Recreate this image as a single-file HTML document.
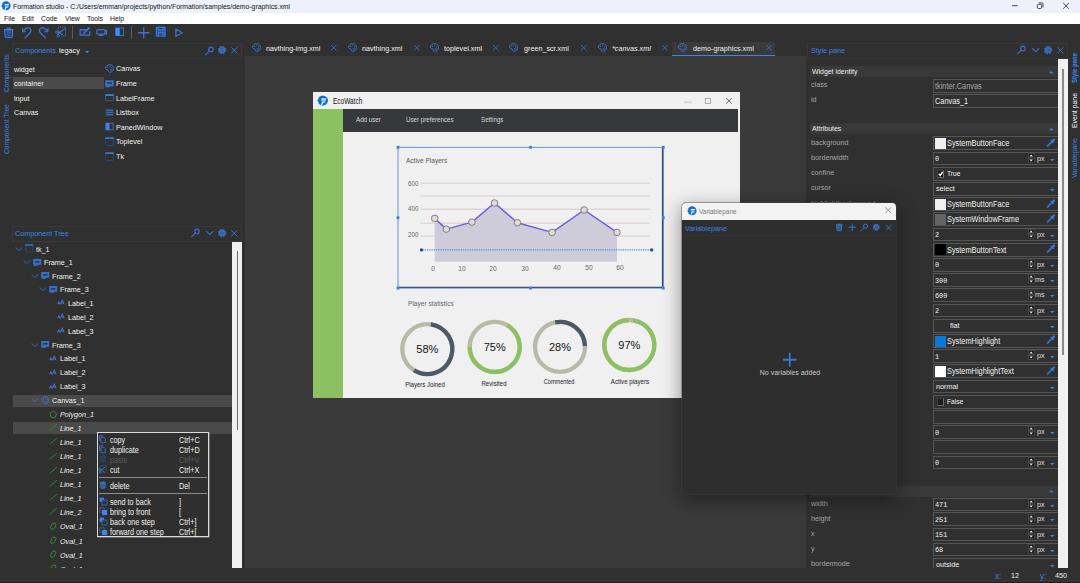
<!DOCTYPE html>
<html><head><meta charset="utf-8"><title>Formation studio</title>
<style>
*{margin:0;padding:0;box-sizing:border-box}
html,body{width:1080px;height:583px;overflow:hidden;background:#303030}
body{font-family:"Liberation Sans",sans-serif;font-size:8px;color:#f0f0f0;position:relative;line-height:1}
.a{position:absolute}
.t{position:absolute;white-space:nowrap;line-height:10px;height:10px;transform:scaleX(.9);transform-origin:0 50%}
.c{transform-origin:50% 50%}
.b{color:#3d84e8}
.g{color:#a6a6a6}
.i{font-style:italic}
svg{position:absolute;overflow:visible}
.hdr{position:absolute;border:1px solid #393939;background:#303030}
.band{position:absolute;background:#393939}
.ent{position:absolute;border:1px solid #555;background:#303030}
.mono{font-family:"Liberation Mono",monospace;font-size:7.6px}
.vt{position:absolute;white-space:nowrap;transform-origin:0 0;transform:rotate(-90deg) scaleX(.87);line-height:10px;height:10px}
</style></head><body>

<div class="a" style="left:0;top:0;width:1080px;height:13px;background:#eef1f9"></div>
<div class="a" style="left:0;top:12.5px;width:1080px;height:11.5px;background:#fff"></div>
<svg style="left:0.75px;top:1.30px" width="9.6" height="9.6" viewBox="0 0 20 20" ><ellipse cx="10.500" cy="10" rx="9.500" ry="9.300" fill="#0b6fd0"/><path d="M0 5.500l4.500 1.500-4.500 1.500zM0 11.500l4 1.500-4 2z" fill="#f0f0f0" opacity="0.9"/><path d="M8 6.200h8.500v2.400h-8.500z" fill="#fff"/><path d="M7.500 9.300h8.500v1.800h-8.500z" fill="#9cc6ef"/><path d="M9.500 11.600h6l-0.500 2h-3.500l-2 4.500h-2.300z" fill="#fff"/></svg>
<div class="t " style="left:12.8px;top:1.90px;color:#111;font-size:7.4px;transform:scaleX(.928)">Formation studio - C:/Users/emman/projects/python/Formation/samples/demo-graphics.xml</div>
<div class="t " style="left:4px;top:13.50px;color:#111;font-size:7.6px">File</div>
<div class="t " style="left:21.5px;top:13.50px;color:#111;font-size:7.6px">Edit</div>
<div class="t " style="left:41px;top:13.50px;color:#111;font-size:7.6px">Code</div>
<div class="t " style="left:64.5px;top:13.50px;color:#111;font-size:7.6px">View</div>
<div class="t " style="left:87px;top:13.50px;color:#111;font-size:7.6px">Tools</div>
<div class="t " style="left:109.5px;top:13.50px;color:#111;font-size:7.6px">Help</div>
<svg style="left:0;top:0" width="1080" height="13"><g stroke="#333" stroke-width="0.900" fill="none"><path d="M1012 5.700h5.700"/><rect x="1037.400" y="4.200" width="4.200" height="4.300" rx="1.100"/><path d="M1038.800 2.900h3a1.200 1.200 0 0 1 1.200 1.200v3.300"/><path d="M1063.200 3l5.700 5.700m0-5.700l-5.700 5.700"/></g></svg>
<div class="a" style="left:0;top:24px;width:1080px;height:18.5px;background:#303030"></div>
<svg style="left:3.15px;top:26.85px" width="11.5" height="11.5" viewBox="0 0 20 20" ><g stroke="#3d84e8" stroke-width="1.700" stroke-linejoin="round" stroke-linecap="round"><path d="M3.500 5h13v11.500a2 2 0 0 1-2 2h-9a2 2 0 0 1-2-2z" fill="#2a5396" fill-opacity="0.600"/><path d="M2.500 4.500h15M7 2h6" fill="none"/><path d="M7.500 8v7.500M10 8v7.500M12.500 8v7.500" stroke-width="1" opacity="0.7"/></g></svg>
<svg style="left:20.85px;top:26.55px" width="11.5" height="11.5" viewBox="0 0 20 20" ><g stroke="#3874d2" fill="none" stroke-width="2.300" stroke-linecap="round" stroke-linejoin="round" stroke-width="1.500"><path d="M3.700 7.700C6 3.500 10 1 13.500 1.500 17 2 18.500 6 16.500 9 14.500 12 10 15.500 7.200 18.700"/><path d="M2.800 2.800V8.200H8.200" stroke-width="1.900"/></g></svg>
<svg style="left:38.45px;top:26.55px" width="11.5" height="11.5" viewBox="0 0 20 20" ><g stroke="#3874d2" fill="none" stroke-width="2.300" stroke-linecap="round" stroke-linejoin="round" stroke-width="1.500" transform="translate(20,0) scale(-1,1)"><path d="M3.700 7.700C6 3.500 10 1 13.500 1.500 17 2 18.500 6 16.500 9 14.500 12 10 15.500 7.200 18.700"/><path d="M2.800 2.800V8.200H8.200" stroke-width="1.900"/></g></svg>
<svg style="left:55.35px;top:26.45px" width="11.5" height="11.5" viewBox="0 0 20 20" ><g stroke="#3d84e8" fill="none" stroke-width="1.500"><path d="M5.500 9V2h13v15.500h-8" stroke-dasharray="2.200 1.200" stroke-width="1.300"/><path d="M17 5L4.500 13M5 10l9 5.500" stroke-width="1.800"/><circle cx="3" cy="10.500" r="2.100"/><circle cx="5.500" cy="16.800" r="2.100"/></g></svg>
<div class="a" style="left:72px;top:26.2px;width:1px;height:13px;background:#5a5a5a"></div>
<svg style="left:79.25px;top:26.45px" width="11.5" height="11.5" viewBox="0 0 20 20" ><g stroke="#3874d2" fill="none" stroke-width="2.300" stroke-linecap="round" stroke-linejoin="round" stroke-width="1.500"><path d="M11 6.500H2v9.300h16.500V10"/><path d="M8.500 12.500L17.500 3.500" stroke-width="3.200"/></g></svg>
<svg style="left:96.45px;top:26.65px" width="11.5" height="11.5" viewBox="0 0 20 20" ><g stroke="#3874d2" fill="none" stroke-width="2.300" stroke-linecap="round" stroke-linejoin="round" stroke-width="1.200"><rect x="1.500" y="4.500" width="14" height="8" rx="2"/><path d="M15.500 6h2.800v6.500h-2.800M5.500 14.500h6" /></g></svg>
<svg style="left:114.10px;top:26.40px" width="11.5" height="11.5" viewBox="0 0 20 20" ><rect x="3" y="3.500" width="14" height="13" fill="none" stroke="#3d84e8" stroke-width="1.400"/><rect x="3" y="3.500" width="7" height="13" fill="#3d8aff"/></svg>
<div class="a" style="left:131px;top:26.2px;width:1px;height:13px;background:#5a5a5a"></div>
<svg style="left:137.55px;top:26.65px" width="11.5" height="11.5" viewBox="0 0 20 20" ><g stroke="#3874d2" fill="none" stroke-width="2.300" stroke-linecap="round" stroke-linejoin="round" stroke-width="1.400"><path d="M10 1v18M1 10h18"/></g></svg>
<svg style="left:155.25px;top:26.45px" width="11.5" height="11.5" viewBox="0 0 20 20" ><g stroke="#3874d2" fill="none" stroke-width="2.300" stroke-linecap="round" stroke-linejoin="round" stroke-width="1.500"><path d="M2.500 2.500h15v15h-15z" fill="#2458a8"/><path d="M6 2.500v4.500h8v-4.500z" fill="#303030"/><path d="M6 17.500v-6h8v6" fill="#303030" fill-opacity="0.5"/></g></svg>
<svg style="left:173.25px;top:26.55px" width="11.5" height="11.5" viewBox="0 0 20 20" ><g stroke="#3874d2" fill="none" stroke-width="2.300" stroke-linecap="round" stroke-linejoin="round" stroke-width="1.5"><path d="M5 3.500L16 10 5 16.500z"/></g></svg>
<div class="vt b" style="left:1.6px;top:91.5px;font-size:7.7px">Components</div>
<div class="vt b" style="left:1.6px;top:153.5px;font-size:7.7px">Component Tree</div>
<div class="hdr" style="left:11.5px;top:42.5px;width:230px;height:16px"></div>
<div class="t b" style="left:14.5px;top:46.10px;">Components</div>
<div class="t " style="left:59px;top:46.10px;">legacy</div>
<svg style="left:85.00px;top:51.10px" width="4.4" height="2.2" viewBox="0 0 10 5"><path d="M0 0h10L5 5z" fill="#3d84e8"/></svg>
<svg style="left:204.90px;top:45.60px" width="9.2" height="9.2" viewBox="0 0 20 20" ><g stroke="#3874d2" fill="none" stroke-width="2.300" stroke-linecap="round" stroke-linejoin="round"><circle cx="13" cy="7.500" r="5"/><path d="M9.300 11.200L1.500 19"/></g></svg>
<svg style="left:216.70px;top:45.20px" width="10.2" height="10.2" viewBox="0 0 20 20" ><g stroke="#3874d2" fill="none"><circle cx="10" cy="10" r="6.800" stroke-width="2.800" stroke-dasharray="3.300 2.040" opacity="0.9"/><circle cx="10" cy="10" r="4.600" stroke-width="3.600" opacity="0.85"/><circle cx="10" cy="10" r="1.600" stroke-width="1.200" stroke="#5590e8"/></g></svg>
<svg style="left:230.10px;top:46.00px" width="8.6" height="8.6" viewBox="0 0 20 20" ><g stroke="#3874d2" fill="none" stroke-width="2.300" stroke-linecap="round" stroke-linejoin="round" stroke-width="2.900"><path d="M3.500 3.500l13 13M16.500 3.500l-13 13"/></g></svg>
<div class="a" style="left:12.5px;top:77px;width:91.5px;height:12.3px;background:#4a4a4a"></div>
<div class="t " style="left:14.2px;top:64.60px;">widget</div>
<div class="t " style="left:14.2px;top:79.22px;">container</div>
<div class="t " style="left:14.2px;top:93.84px;">input</div>
<div class="t " style="left:14.2px;top:108.46px;">Canvas</div>
<svg style="left:105.10px;top:64.00px" width="9" height="9" viewBox="0 0 20 20" ><g stroke="#3a78d6" fill="none" stroke-width="2" stroke-linejoin="round"><path d="M10.500 1.500C5 1.500 1.200 5 1.200 9c0 2.300 1.600 3.600 3.400 3.600 1.700 0 2.900 0.700 3.100 2.400 0.300 2.300 1.400 3.500 3.600 3.500 4.400 0 7.500-3.800 7.500-8.500 0-5-3.500-8.500-8.300-8.500z"/><circle cx="6" cy="7.500" r="1.300" fill="#3a78d6" stroke="none"/><circle cx="10.500" cy="5.500" r="1.300" fill="#3a78d6" stroke="none"/><circle cx="14.500" cy="8.500" r="1.300" fill="#3a78d6" stroke="none"/><circle cx="13" cy="13.500" r="1.500" stroke-width="1.300"/></g></svg>
<div class="t " style="left:116.3px;top:64.30px;">Canvas</div>
<svg style="left:105.10px;top:78.60px" width="9" height="9" viewBox="0 0 20 20" ><path d="M0.500 2.500h19v13.500h-7.500v2.300h-10.500v-2.300h-1z" fill="#356fc9"/><path d="M5 7.200h10.500v3.800h-10.500z" fill="#303030" opacity="0.85"/></svg>
<div class="t " style="left:116.3px;top:78.90px;">Frame</div>
<svg style="left:105.10px;top:93.20px" width="9" height="9" viewBox="0 0 20 20" ><rect x="1.200" y="3.500" width="17.600" height="13.500" rx="1" fill="none" stroke="#2f62b3" stroke-width="1.800"/><rect x="0.500" y="2.500" width="19" height="4" rx="1" fill="#3d7de0"/></svg>
<div class="t " style="left:116.3px;top:93.50px;">LabelFrame</div>
<svg style="left:105.10px;top:107.80px" width="9" height="9" viewBox="0 0 20 20" ><path d="M1.500 5h17M1.500 10h17M1.500 15h17" stroke="#3468bd" stroke-width="2.800"/></svg>
<div class="t " style="left:116.3px;top:108.10px;">Listbox</div>
<svg style="left:105.10px;top:122.40px" width="9" height="9" viewBox="0 0 20 20" ><rect x="2" y="2.500" width="16" height="15" fill="none" stroke="#3d84e8" stroke-width="1.6"/><rect x="2" y="2.500" width="8" height="15" fill="#3d84e8"/></svg>
<div class="t " style="left:116.3px;top:122.70px;">PanedWindow</div>
<svg style="left:105.10px;top:137.00px" width="9" height="9" viewBox="0 0 20 20" ><rect x="1.500" y="2" width="17" height="17" rx="2.500" fill="none" stroke="#2756a3" stroke-width="1.500"/><path d="M1.200 2.300h17.600" stroke="#3d8aff" stroke-width="2.800" stroke-linecap="round"/></svg>
<div class="t " style="left:116.3px;top:137.30px;">Toplevel</div>
<svg style="left:105.10px;top:151.60px" width="9" height="9" viewBox="0 0 20 20" ><rect x="1.500" y="2" width="17" height="17" rx="2.500" fill="none" stroke="#2756a3" stroke-width="1.500"/><path d="M1.200 2.300h17.600" stroke="#3d8aff" stroke-width="2.800" stroke-linecap="round"/></svg>
<div class="t " style="left:116.3px;top:151.90px;">Tk</div>
<div class="hdr" style="left:11.5px;top:225.5px;width:230px;height:16px"></div>
<div class="t b" style="left:14.5px;top:228.90px;">Component Tree</div>
<svg style="left:191.10px;top:228.30px" width="9.2" height="9.2" viewBox="0 0 20 20" ><g stroke="#3874d2" fill="none" stroke-width="2.300" stroke-linecap="round" stroke-linejoin="round"><circle cx="13" cy="7.500" r="5"/><path d="M9.300 11.200L1.500 19"/></g></svg>
<svg style="left:205.25px;top:227.85px" width="9.3" height="9.3" viewBox="0 0 20 20" ><g stroke="#3874d2" fill="none" stroke-width="2.300" stroke-linecap="round" stroke-linejoin="round"><path d="M3 7l7 7 7-7"/></g></svg>
<svg style="left:217.00px;top:227.90px" width="10.2" height="10.2" viewBox="0 0 20 20" ><g stroke="#3874d2" fill="none"><circle cx="10" cy="10" r="6.800" stroke-width="2.800" stroke-dasharray="3.300 2.040" opacity="0.9"/><circle cx="10" cy="10" r="4.600" stroke-width="3.600" opacity="0.85"/><circle cx="10" cy="10" r="1.600" stroke-width="1.200" stroke="#5590e8"/></g></svg>
<svg style="left:230.20px;top:228.70px" width="8.6" height="8.6" viewBox="0 0 20 20" ><g stroke="#3874d2" fill="none" stroke-width="2.300" stroke-linecap="round" stroke-linejoin="round" stroke-width="2.900"><path d="M3.500 3.500l13 13M16.500 3.500l-13 13"/></g></svg>
<div class="a" style="left:231.900px;top:242px;width:10.500px;height:326.200px;background:#f0f0f0"></div>
<div class="a" style="left:236.700px;top:251.300px;width:1.400px;height:178.700px;background:#6a6a6a"></div>
<div class="a" style="left:12.500px;top:394.600px;width:219.400px;height:12.300px;background:#4a4a4a"></div>
<div class="a" style="left:12.500px;top:422px;width:219.400px;height:12.300px;background:#4a4a4a"></div>
<div class="a" style="left:12px;top:242px;width:220px;height:326px;overflow:hidden"><div class="a" style="left:-12px;top:-242px">
<svg style="left:14.70px;top:244.60px" width="8" height="8" viewBox="0 0 20 20" ><g stroke="#3874d2" fill="none" stroke-width="2.300" stroke-linecap="round" stroke-linejoin="round"><path d="M3 7l7 7 7-7"/></g></svg>
<svg style="left:24.80px;top:244.20px" width="8.4" height="8.4" viewBox="0 0 20 20" ><rect x="1.500" y="2" width="17" height="17" rx="2.500" fill="none" stroke="#2756a3" stroke-width="1.500"/><path d="M1.200 2.300h17.600" stroke="#3d8aff" stroke-width="2.800" stroke-linecap="round"/></svg>
<div class="t " style="left:35.9px;top:244.60px;">tk_1</div>
<svg style="left:22.70px;top:258.00px" width="8" height="8" viewBox="0 0 20 20" ><g stroke="#3874d2" fill="none" stroke-width="2.300" stroke-linecap="round" stroke-linejoin="round"><path d="M3 7l7 7 7-7"/></g></svg>
<svg style="left:32.80px;top:257.60px" width="8.4" height="8.4" viewBox="0 0 20 20" ><path d="M0.500 2.500h19v13.500h-7.500v2.300h-10.500v-2.300h-1z" fill="#356fc9"/><path d="M5 7.200h10.500v3.800h-10.500z" fill="#303030" opacity="0.85"/></svg>
<div class="t " style="left:43.9px;top:258.00px;">Frame_1</div>
<svg style="left:30.70px;top:271.60px" width="8" height="8" viewBox="0 0 20 20" ><g stroke="#3874d2" fill="none" stroke-width="2.300" stroke-linecap="round" stroke-linejoin="round"><path d="M3 7l7 7 7-7"/></g></svg>
<svg style="left:40.80px;top:271.20px" width="8.4" height="8.4" viewBox="0 0 20 20" ><path d="M0.500 2.500h19v13.500h-7.500v2.300h-10.500v-2.300h-1z" fill="#356fc9"/><path d="M5 7.200h10.500v3.800h-10.500z" fill="#303030" opacity="0.85"/></svg>
<div class="t " style="left:51.900000000000006px;top:271.60px;">Frame_2</div>
<svg style="left:38.70px;top:285.10px" width="8" height="8" viewBox="0 0 20 20" ><g stroke="#3874d2" fill="none" stroke-width="2.300" stroke-linecap="round" stroke-linejoin="round"><path d="M3 7l7 7 7-7"/></g></svg>
<svg style="left:48.80px;top:284.70px" width="8.4" height="8.4" viewBox="0 0 20 20" ><path d="M0.500 2.500h19v13.500h-7.500v2.300h-10.500v-2.300h-1z" fill="#356fc9"/><path d="M5 7.200h10.500v3.800h-10.500z" fill="#303030" opacity="0.85"/></svg>
<div class="t " style="left:59.900000000000006px;top:285.10px;">Frame_3</div>
<svg style="left:56.80px;top:298.20px" width="8.4" height="8.4" viewBox="0 0 20 20" ><g stroke="#3d84e8" fill="none" stroke-width="2" stroke-linejoin="miter"><path d="M1.500 15.500l3-7 3 7M3 13h3.500"/><path d="M8.500 15.500l4-11.500 4.500 11.500M10.500 11.500h5"/></g></svg>
<div class="t " style="left:67.9px;top:298.60px;">Label_1</div>
<svg style="left:56.80px;top:312.20px" width="8.4" height="8.4" viewBox="0 0 20 20" ><g stroke="#3d84e8" fill="none" stroke-width="2" stroke-linejoin="miter"><path d="M1.500 15.500l3-7 3 7M3 13h3.500"/><path d="M8.500 15.500l4-11.500 4.500 11.500M10.500 11.500h5"/></g></svg>
<div class="t " style="left:67.9px;top:312.60px;">Label_2</div>
<svg style="left:56.80px;top:326.20px" width="8.4" height="8.4" viewBox="0 0 20 20" ><g stroke="#3d84e8" fill="none" stroke-width="2" stroke-linejoin="miter"><path d="M1.500 15.500l3-7 3 7M3 13h3.500"/><path d="M8.500 15.500l4-11.500 4.500 11.500M10.500 11.500h5"/></g></svg>
<div class="t " style="left:67.9px;top:326.60px;">Label_3</div>
<svg style="left:30.70px;top:340.80px" width="8" height="8" viewBox="0 0 20 20" ><g stroke="#3874d2" fill="none" stroke-width="2.300" stroke-linecap="round" stroke-linejoin="round"><path d="M3 7l7 7 7-7"/></g></svg>
<svg style="left:40.80px;top:340.40px" width="8.4" height="8.4" viewBox="0 0 20 20" ><path d="M0.500 2.500h19v13.500h-7.500v2.300h-10.500v-2.300h-1z" fill="#356fc9"/><path d="M5 7.200h10.500v3.800h-10.500z" fill="#303030" opacity="0.85"/></svg>
<div class="t " style="left:51.900000000000006px;top:340.80px;">Frame_3</div>
<svg style="left:48.80px;top:353.90px" width="8.4" height="8.4" viewBox="0 0 20 20" ><g stroke="#3d84e8" fill="none" stroke-width="2" stroke-linejoin="miter"><path d="M1.500 15.500l3-7 3 7M3 13h3.500"/><path d="M8.500 15.500l4-11.500 4.500 11.500M10.500 11.500h5"/></g></svg>
<div class="t " style="left:59.900000000000006px;top:354.30px;">Label_1</div>
<svg style="left:48.80px;top:367.90px" width="8.4" height="8.4" viewBox="0 0 20 20" ><g stroke="#3d84e8" fill="none" stroke-width="2" stroke-linejoin="miter"><path d="M1.500 15.500l3-7 3 7M3 13h3.500"/><path d="M8.500 15.500l4-11.500 4.500 11.500M10.500 11.500h5"/></g></svg>
<div class="t " style="left:59.900000000000006px;top:368.30px;">Label_2</div>
<svg style="left:48.80px;top:381.90px" width="8.4" height="8.4" viewBox="0 0 20 20" ><g stroke="#3d84e8" fill="none" stroke-width="2" stroke-linejoin="miter"><path d="M1.500 15.500l3-7 3 7M3 13h3.500"/><path d="M8.500 15.500l4-11.500 4.500 11.500M10.500 11.500h5"/></g></svg>
<div class="t " style="left:59.900000000000006px;top:382.30px;">Label_3</div>
<svg style="left:30.70px;top:396.30px" width="8" height="8" viewBox="0 0 20 20" ><g stroke="#3874d2" fill="none" stroke-width="2.300" stroke-linecap="round" stroke-linejoin="round"><path d="M3 7l7 7 7-7"/></g></svg>
<svg style="left:40.80px;top:395.90px" width="8.4" height="8.4" viewBox="0 0 20 20" ><g stroke="#3a78d6" fill="none" stroke-width="2" stroke-linejoin="round"><path d="M10.500 1.500C5 1.500 1.200 5 1.200 9c0 2.300 1.600 3.600 3.400 3.600 1.700 0 2.900 0.700 3.100 2.400 0.300 2.300 1.400 3.500 3.600 3.500 4.400 0 7.500-3.800 7.500-8.500 0-5-3.500-8.500-8.300-8.500z"/><circle cx="6" cy="7.500" r="1.300" fill="#3a78d6" stroke="none"/><circle cx="10.500" cy="5.500" r="1.300" fill="#3a78d6" stroke="none"/><circle cx="14.500" cy="8.500" r="1.300" fill="#3a78d6" stroke="none"/><circle cx="13" cy="13.500" r="1.500" stroke-width="1.300"/></g></svg>
<div class="t " style="left:51.900000000000006px;top:396.30px;">Canvas_1</div>
<svg style="left:48.80px;top:409.70px" width="8.4" height="8.4" viewBox="0 0 20 20" ><path d="M10 2.500l8 6-3 9h-10l-3-9z" fill="none" stroke="#35a83a" stroke-width="1.8" stroke-linejoin="round"/></svg>
<div class="t i" style="left:59.900000000000006px;top:410.10px;">Polygon_1</div>
<svg style="left:48.80px;top:423.40px" width="8.4" height="8.4" viewBox="0 0 20 20" ><path d="M2.500 17L18 3.500" fill="none" stroke="#35a83a" stroke-width="1.7" stroke-linecap="round"/></svg>
<div class="t i" style="left:59.900000000000006px;top:423.80px;">Line_1</div>
<svg style="left:48.80px;top:437.40px" width="8.4" height="8.4" viewBox="0 0 20 20" ><path d="M2.500 17L18 3.500" fill="none" stroke="#35a83a" stroke-width="1.7" stroke-linecap="round"/></svg>
<div class="t i" style="left:59.900000000000006px;top:437.80px;">Line_1</div>
<svg style="left:48.80px;top:451.60px" width="8.4" height="8.4" viewBox="0 0 20 20" ><path d="M2.500 17L18 3.500" fill="none" stroke="#35a83a" stroke-width="1.7" stroke-linecap="round"/></svg>
<div class="t i" style="left:59.900000000000006px;top:452.00px;">Line_1</div>
<svg style="left:48.80px;top:465.60px" width="8.4" height="8.4" viewBox="0 0 20 20" ><path d="M2.500 17L18 3.500" fill="none" stroke="#35a83a" stroke-width="1.7" stroke-linecap="round"/></svg>
<div class="t i" style="left:59.900000000000006px;top:466.00px;">Line_1</div>
<svg style="left:48.80px;top:479.40px" width="8.4" height="8.4" viewBox="0 0 20 20" ><path d="M2.500 17L18 3.500" fill="none" stroke="#35a83a" stroke-width="1.7" stroke-linecap="round"/></svg>
<div class="t i" style="left:59.900000000000006px;top:479.80px;">Line_1</div>
<svg style="left:48.80px;top:493.40px" width="8.4" height="8.4" viewBox="0 0 20 20" ><path d="M2.500 17L18 3.500" fill="none" stroke="#35a83a" stroke-width="1.7" stroke-linecap="round"/></svg>
<div class="t i" style="left:59.900000000000006px;top:493.80px;">Line_1</div>
<svg style="left:48.80px;top:507.40px" width="8.4" height="8.4" viewBox="0 0 20 20" ><path d="M2.500 17L18 3.500" fill="none" stroke="#35a83a" stroke-width="1.7" stroke-linecap="round"/></svg>
<div class="t i" style="left:59.900000000000006px;top:507.80px;">Line_2</div>
<svg style="left:48.80px;top:521.90px" width="8.4" height="8.4" viewBox="0 0 20 20" ><ellipse cx="10" cy="10" rx="5" ry="8.500" transform="rotate(32 10 10)" fill="none" stroke="#35a83a" stroke-width="1.7"/></svg>
<div class="t i" style="left:59.900000000000006px;top:522.30px;">Oval_1</div>
<svg style="left:48.80px;top:536.10px" width="8.4" height="8.4" viewBox="0 0 20 20" ><ellipse cx="10" cy="10" rx="5" ry="8.500" transform="rotate(32 10 10)" fill="none" stroke="#35a83a" stroke-width="1.7"/></svg>
<div class="t i" style="left:59.900000000000006px;top:536.50px;">Oval_1</div>
<svg style="left:48.80px;top:550.20px" width="8.4" height="8.4" viewBox="0 0 20 20" ><ellipse cx="10" cy="10" rx="5" ry="8.500" transform="rotate(32 10 10)" fill="none" stroke="#35a83a" stroke-width="1.7"/></svg>
<div class="t i" style="left:59.900000000000006px;top:550.60px;">Oval_1</div>
<svg style="left:48.80px;top:564.20px" width="8.4" height="8.4" viewBox="0 0 20 20" ><ellipse cx="10" cy="10" rx="5" ry="8.500" transform="rotate(32 10 10)" fill="none" stroke="#35a83a" stroke-width="1.7"/></svg>
<div class="t i" style="left:59.900000000000006px;top:564.60px;">Oval_1</div>
</div></div>
<div class="a" style="left:244.8px;top:56px;width:561.2px;height:512.3px;background:#3a3a3a"></div>
<div class="a" style="left:671.5px;top:42.3px;width:103.5px;height:13.7px;background:#3a3a3a"></div>
<div class="a" style="left:671.5px;top:54.6px;width:103.5px;height:1.6px;background:#3d84e8"></div>
<svg style="left:251.50px;top:43.40px" width="9" height="9" viewBox="0 0 20 20" ><g stroke="#3a78d6" fill="none" stroke-width="2" stroke-linejoin="round"><path d="M10.500 1.500C5 1.500 1.200 5 1.200 9c0 2.300 1.600 3.600 3.400 3.600 1.700 0 2.900 0.700 3.100 2.400 0.300 2.300 1.400 3.500 3.600 3.500 4.400 0 7.500-3.800 7.500-8.500 0-5-3.500-8.500-8.300-8.500z"/><circle cx="6" cy="7.500" r="1.300" fill="#3a78d6" stroke="none"/><circle cx="10.500" cy="5.500" r="1.300" fill="#3a78d6" stroke="none"/><circle cx="14.500" cy="8.500" r="1.300" fill="#3a78d6" stroke="none"/><circle cx="13" cy="13.500" r="1.500" stroke-width="1.300"/></g></svg>
<div class="t " style="left:265.5px;top:44.20px;">navthing-img.xml</div>
<svg style="left:330.25px;top:44.25px" width="7.5" height="7.5" viewBox="0 0 20 20" ><g stroke="#3874d2" fill="none" stroke-width="2.300" stroke-linecap="round" stroke-linejoin="round" stroke-width="2.900"><path d="M3.500 3.500l13 13M16.500 3.500l-13 13"/></g></svg>
<svg style="left:347.50px;top:43.40px" width="9" height="9" viewBox="0 0 20 20" ><g stroke="#3a78d6" fill="none" stroke-width="2" stroke-linejoin="round"><path d="M10.500 1.500C5 1.500 1.200 5 1.200 9c0 2.300 1.600 3.600 3.400 3.600 1.700 0 2.900 0.700 3.100 2.400 0.300 2.300 1.400 3.500 3.600 3.500 4.400 0 7.500-3.800 7.500-8.500 0-5-3.500-8.500-8.300-8.500z"/><circle cx="6" cy="7.500" r="1.300" fill="#3a78d6" stroke="none"/><circle cx="10.500" cy="5.500" r="1.300" fill="#3a78d6" stroke="none"/><circle cx="14.500" cy="8.500" r="1.300" fill="#3a78d6" stroke="none"/><circle cx="13" cy="13.500" r="1.500" stroke-width="1.300"/></g></svg>
<div class="t " style="left:361.8px;top:44.20px;">navthing.xml</div>
<svg style="left:412.75px;top:44.25px" width="7.5" height="7.5" viewBox="0 0 20 20" ><g stroke="#3874d2" fill="none" stroke-width="2.300" stroke-linecap="round" stroke-linejoin="round" stroke-width="2.900"><path d="M3.500 3.500l13 13M16.500 3.500l-13 13"/></g></svg>
<svg style="left:429.50px;top:43.40px" width="9" height="9" viewBox="0 0 20 20" ><g stroke="#3a78d6" fill="none" stroke-width="2" stroke-linejoin="round"><path d="M10.500 1.500C5 1.500 1.200 5 1.200 9c0 2.300 1.600 3.600 3.400 3.600 1.700 0 2.900 0.700 3.100 2.400 0.300 2.300 1.400 3.500 3.600 3.500 4.400 0 7.500-3.800 7.500-8.500 0-5-3.500-8.500-8.300-8.500z"/><circle cx="6" cy="7.500" r="1.300" fill="#3a78d6" stroke="none"/><circle cx="10.500" cy="5.500" r="1.300" fill="#3a78d6" stroke="none"/><circle cx="14.500" cy="8.500" r="1.300" fill="#3a78d6" stroke="none"/><circle cx="13" cy="13.500" r="1.500" stroke-width="1.300"/></g></svg>
<div class="t " style="left:443.8px;top:44.20px;">toplevel.xml</div>
<svg style="left:492.25px;top:44.25px" width="7.5" height="7.5" viewBox="0 0 20 20" ><g stroke="#3874d2" fill="none" stroke-width="2.300" stroke-linecap="round" stroke-linejoin="round" stroke-width="2.900"><path d="M3.500 3.500l13 13M16.500 3.500l-13 13"/></g></svg>
<svg style="left:509.30px;top:43.40px" width="9" height="9" viewBox="0 0 20 20" ><g stroke="#3a78d6" fill="none" stroke-width="2" stroke-linejoin="round"><path d="M10.500 1.500C5 1.500 1.200 5 1.200 9c0 2.300 1.600 3.600 3.400 3.600 1.700 0 2.900 0.700 3.100 2.400 0.300 2.300 1.400 3.500 3.600 3.500 4.400 0 7.500-3.800 7.500-8.500 0-5-3.500-8.500-8.300-8.500z"/><circle cx="6" cy="7.500" r="1.300" fill="#3a78d6" stroke="none"/><circle cx="10.500" cy="5.500" r="1.300" fill="#3a78d6" stroke="none"/><circle cx="14.500" cy="8.500" r="1.300" fill="#3a78d6" stroke="none"/><circle cx="13" cy="13.500" r="1.500" stroke-width="1.300"/></g></svg>
<div class="t " style="left:523.5px;top:44.20px;">green_scr.xml</div>
<svg style="left:580.05px;top:44.25px" width="7.5" height="7.5" viewBox="0 0 20 20" ><g stroke="#3874d2" fill="none" stroke-width="2.300" stroke-linecap="round" stroke-linejoin="round" stroke-width="2.900"><path d="M3.500 3.500l13 13M16.500 3.500l-13 13"/></g></svg>
<svg style="left:597.50px;top:43.40px" width="9" height="9" viewBox="0 0 20 20" ><g stroke="#3a78d6" fill="none" stroke-width="2" stroke-linejoin="round"><path d="M10.500 1.500C5 1.500 1.200 5 1.200 9c0 2.300 1.600 3.600 3.400 3.600 1.700 0 2.900 0.700 3.100 2.400 0.300 2.300 1.400 3.500 3.600 3.500 4.400 0 7.500-3.800 7.500-8.500 0-5-3.500-8.500-8.300-8.500z"/><circle cx="6" cy="7.500" r="1.300" fill="#3a78d6" stroke="none"/><circle cx="10.500" cy="5.500" r="1.300" fill="#3a78d6" stroke="none"/><circle cx="14.500" cy="8.500" r="1.300" fill="#3a78d6" stroke="none"/><circle cx="13" cy="13.500" r="1.500" stroke-width="1.300"/></g></svg>
<div class="t i" style="left:612px;top:44.20px;">*canvas.xml</div>
<svg style="left:661.25px;top:44.25px" width="7.5" height="7.5" viewBox="0 0 20 20" ><g stroke="#3874d2" fill="none" stroke-width="2.300" stroke-linecap="round" stroke-linejoin="round" stroke-width="2.900"><path d="M3.500 3.500l13 13M16.500 3.500l-13 13"/></g></svg>
<svg style="left:678.00px;top:43.40px" width="9" height="9" viewBox="0 0 20 20" ><g stroke="#3a78d6" fill="none" stroke-width="2" stroke-linejoin="round"><path d="M10.500 1.500C5 1.500 1.200 5 1.200 9c0 2.300 1.600 3.600 3.400 3.600 1.700 0 2.900 0.700 3.100 2.400 0.300 2.300 1.400 3.500 3.600 3.500 4.400 0 7.500-3.800 7.500-8.500 0-5-3.500-8.500-8.300-8.500z"/><circle cx="6" cy="7.500" r="1.300" fill="#3a78d6" stroke="none"/><circle cx="10.500" cy="5.500" r="1.300" fill="#3a78d6" stroke="none"/><circle cx="14.500" cy="8.500" r="1.300" fill="#3a78d6" stroke="none"/><circle cx="13" cy="13.500" r="1.500" stroke-width="1.300"/></g></svg>
<div class="t " style="left:693px;top:44.20px;">demo-graphics.xml</div>
<svg style="left:764.65px;top:44.25px" width="7.5" height="7.5" viewBox="0 0 20 20" ><g stroke="#3874d2" fill="none" stroke-width="2.300" stroke-linecap="round" stroke-linejoin="round" stroke-width="2.900"><path d="M3.500 3.500l13 13M16.500 3.500l-13 13"/></g></svg>
<div class="a" style="left:0;top:568.3px;width:1080px;height:12px;background:#303030"></div>
<div class="a" style="left:0;top:579.8px;width:1080px;height:4px;background:linear-gradient(#353535 0,#3a3a3a 25%,#212121 55%,#212121 100%)"></div>
<div class="t b" style="left:995px;top:570.50px;font-size:9px">x:</div>
<div class="t " style="left:1010.5px;top:570.50px;">12</div>
<div class="t b" style="left:1039.8px;top:570.50px;font-size:9px">y:</div>
<div class="t " style="left:1054.6px;top:570.50px;">450</div>
<div class="a" style="left:313px;top:91.700px;width:426.900px;height:306px;background:#f0f0f0"></div>
<svg style="left:317.30px;top:95.30px" width="11" height="11" viewBox="0 0 20 20" ><ellipse cx="10.500" cy="10" rx="9.500" ry="9.300" fill="#0b6fd0"/><path d="M0 5.500l4.500 1.500-4.500 1.500zM0 11.500l4 1.500-4 2z" fill="#f0f0f0" opacity="0.9"/><path d="M8 6.200h8.500v2.400h-8.500z" fill="#fff"/><path d="M7.500 9.300h8.500v1.800h-8.500z" fill="#9cc6ef"/><path d="M9.500 11.600h6l-0.500 2h-3.500l-2 4.500h-2.300z" fill="#fff"/></svg>
<div class="t " style="left:332.6px;top:97.10px;color:#111;font-size:8.2px;transform:scaleX(.79)">EcoWatch</div>
<svg style="left:0;top:0" width="1080" height="120"><g stroke="#333" stroke-width="0.8" fill="none"><path d="M684 102.100h7.700" stroke="#c4c4c4" stroke-width="1.100"/><rect x="705.300" y="98.300" width="5.200" height="5" stroke="#8a8a8a" stroke-width="0.700"/><path d="M726.200 98.100l5.600 5.400m0-5.400l-5.600 5.400" stroke-width="0.750"/></g></svg>
<div class="a" style="left:313px;top:108.700px;width:29.800px;height:289px;background:#8cc162"></div>
<div class="a" style="left:342.800px;top:108.700px;width:395.500px;height:23px;background:#36383c"></div>
<div class="t " style="left:355.5px;top:115.30px;color:#d8d8d8;font-size:7.4px;transform:scaleX(.84)">Add user</div>
<div class="t " style="left:406px;top:115.30px;color:#d8d8d8;font-size:7.4px;transform:scaleX(.84)">User preferences</div>
<div class="t " style="left:480.5px;top:115.30px;color:#d8d8d8;font-size:7.4px;transform:scaleX(.84)">Settings</div>
<div class="t " style="left:405.6px;top:156.20px;color:#555;font-size:7.6px;transform:scaleX(.856)">Active Players</div>
<div class="t " style="left:407.8px;top:298.90px;color:#666;font-size:7.6px;transform:scaleX(.867)">Player statistics</div>
<svg style="left:0;top:0" width="1080" height="583">
<path d="M420.400 183.1H650" stroke="#cbbcbc" stroke-width="0.700"/>
<path d="M420.400 196H650" stroke="#cbbcbc" stroke-width="0.700"/>
<path d="M420.400 209.2H650" stroke="#cbbcbc" stroke-width="0.700"/>
<path d="M420.400 223.2H650" stroke="#cbbcbc" stroke-width="0.700"/>
<path d="M420.400 236.1H650" stroke="#cbbcbc" stroke-width="0.700"/>
<polygon points="434.700,261.700 434.7,218.4 446.3,229.1 471.9,222.1 494.5,203 517.4,222.7 552.1,232.4 584.1,210 617,232.4 617,261.700" fill="#cfccd9"/>
<polyline points="434.7,218.4 446.3,229.1 471.9,222.1 494.5,203 517.4,222.7 552.1,232.4 584.1,210 617,232.4" fill="none" stroke="#6c5ce0" stroke-width="1.500" stroke-linejoin="round"/>
<circle cx="434.7" cy="218.4" r="3.300" fill="#dcdcdc" stroke="#85706d" stroke-width="0.900"/>
<circle cx="446.3" cy="229.1" r="3.300" fill="#dcdcdc" stroke="#85706d" stroke-width="0.900"/>
<circle cx="471.9" cy="222.1" r="3.300" fill="#dcdcdc" stroke="#85706d" stroke-width="0.900"/>
<circle cx="494.5" cy="203" r="3.300" fill="#dcdcdc" stroke="#85706d" stroke-width="0.900"/>
<circle cx="517.4" cy="222.7" r="3.300" fill="#dcdcdc" stroke="#85706d" stroke-width="0.900"/>
<circle cx="552.1" cy="232.4" r="3.300" fill="#dcdcdc" stroke="#85706d" stroke-width="0.900"/>
<circle cx="584.1" cy="210" r="3.300" fill="#dcdcdc" stroke="#85706d" stroke-width="0.900"/>
<circle cx="617" cy="232.4" r="3.300" fill="#dcdcdc" stroke="#85706d" stroke-width="0.900"/>
<path d="M421.500 249.900H651.700" stroke="#4a8be8" stroke-width="1.100" stroke-dasharray="1 0.800"/>
<circle cx="421.500" cy="249.900" r="1.700" fill="#1d4f9e"/><circle cx="651.700" cy="249.900" r="1.700" fill="#1d4f9e"/>
<path d="M662.600 147.300V287.400H398" stroke="#3b4656" stroke-width="1.400" fill="none"/>
<rect x="398" y="147.300" width="265.300" height="140.800" fill="none" stroke="#3d7de6" stroke-width="0.800"/>
<rect x="396.6" y="145.9" width="2.800" height="2.800" fill="#3d7de6"/>
<rect x="529.2" y="145.9" width="2.800" height="2.800" fill="#3d7de6"/>
<rect x="661.9" y="145.9" width="2.800" height="2.800" fill="#3d7de6"/>
<rect x="396.6" y="216.29999999999998" width="2.800" height="2.800" fill="#3d7de6"/>
<rect x="661.9" y="216.29999999999998" width="2.800" height="2.800" fill="#3d7de6"/>
<rect x="396.6" y="286.70000000000005" width="2.800" height="2.800" fill="#3d7de6"/>
<rect x="529.2" y="286.70000000000005" width="2.800" height="2.800" fill="#3d7de6"/>
<rect x="661.9" y="286.70000000000005" width="2.800" height="2.800" fill="#3d7de6"/>
<circle cx="427.3" cy="349.1" r="25" fill="none" stroke="#b9baa6" stroke-width="4.300"/>
<path d="M430.78 324.34A25 25 0 1 1 414.05 370.30" fill="none" stroke="#4b5869" stroke-width="4.3"/>
<circle cx="494.7" cy="346.9" r="25" fill="none" stroke="#b9baa6" stroke-width="4.300"/>
<path d="M507.20 325.25A25 25 0 1 1 469.70 346.90" fill="none" stroke="#8cc162" stroke-width="4.3"/>
<circle cx="560" cy="346.9" r="25" fill="none" stroke="#b9baa6" stroke-width="4.300"/>
<path d="M555.23 322.36A25 25 0 0 1 584.98 346.03" fill="none" stroke="#4b5869" stroke-width="4.3"/>
<circle cx="629.3" cy="345" r="25" fill="none" stroke="#b9baa6" stroke-width="4.300"/>
<path d="M633.21 320.31A25 25 0 1 1 628.86 320.00" fill="none" stroke="#8cc162" stroke-width="4.3"/>
</svg>
<div class="t c" style="left:423px;width:20px;text-align:center;top:264px;color:#666;font-size:7.4px">0</div>
<div class="t c" style="left:451.6px;width:20px;text-align:center;top:264px;color:#666;font-size:7.4px">10</div>
<div class="t c" style="left:483.4px;width:20px;text-align:center;top:264px;color:#666;font-size:7.4px">20</div>
<div class="t c" style="left:514.6px;width:20px;text-align:center;top:264px;color:#666;font-size:7.4px">30</div>
<div class="t c" style="left:547.2px;width:20px;text-align:center;top:263.2px;color:#666;font-size:7.4px">40</div>
<div class="t c" style="left:579.2px;width:20px;text-align:center;top:263.2px;color:#666;font-size:7.4px">50</div>
<div class="t c" style="left:609.7px;width:20px;text-align:center;top:263.2px;color:#666;font-size:7.4px">60</div>
<div class="t " style="left:407.6px;top:178.50px;color:#666;font-size:7.4px;transform:scaleX(.84)">600</div>
<div class="t " style="left:407.6px;top:203.90px;color:#666;font-size:7.4px;transform:scaleX(.84)">400</div>
<div class="t " style="left:407.6px;top:230.30px;color:#666;font-size:7.4px;transform:scaleX(.84)">200</div>
<div class="t c" style="left:407.3px;width:40px;text-align:center;top:343.3px;line-height:12px;height:12px;color:#111;font-size:11px;transform:none">58%</div>
<div class="t c" style="left:474.7px;width:40px;text-align:center;top:341.2px;line-height:12px;height:12px;color:#111;font-size:11px;transform:none">75%</div>
<div class="t c" style="left:540px;width:40px;text-align:center;top:341.2px;line-height:12px;height:12px;color:#111;font-size:11px;transform:none">28%</div>
<div class="t c" style="left:609.3px;width:40px;text-align:center;top:339.3px;line-height:12px;height:12px;color:#111;font-size:11px;transform:none">97%</div>
<div class="t c" style="left:395.3px;width:60px;text-align:center;top:379.5px;color:#222;font-size:7.2px;transform:scaleX(0.842)">Players Joined</div>
<div class="t c" style="left:464px;width:60px;text-align:center;top:378.5px;color:#222;font-size:7.2px;transform:scaleX(0.85)">Revisited</div>
<div class="t c" style="left:528.6px;width:60px;text-align:center;top:376.7px;color:#222;font-size:7.2px;transform:scaleX(0.78)">Commented</div>
<div class="t c" style="left:599.6px;width:60px;text-align:center;top:377.4px;color:#222;font-size:7.2px;transform:scaleX(0.855)">Active players</div>
<div class="hdr" style="left:807px;top:42.5px;width:260.5px;height:16px"></div>
<div class="t b" style="left:810.5px;top:45.90px;">Style pane</div>
<svg style="left:1016.90px;top:45.30px" width="9.2" height="9.2" viewBox="0 0 20 20" ><g stroke="#3874d2" fill="none" stroke-width="2.300" stroke-linecap="round" stroke-linejoin="round"><circle cx="13" cy="7.500" r="5"/><path d="M9.300 11.200L1.500 19"/></g></svg>
<svg style="left:1030.85px;top:44.95px" width="9.3" height="9.3" viewBox="0 0 20 20" ><g stroke="#3874d2" fill="none" stroke-width="2.300" stroke-linecap="round" stroke-linejoin="round"><path d="M3 7l7 7 7-7"/></g></svg>
<svg style="left:1042.80px;top:44.90px" width="10.2" height="10.2" viewBox="0 0 20 20" ><g stroke="#3874d2" fill="none"><circle cx="10" cy="10" r="6.800" stroke-width="2.800" stroke-dasharray="3.300 2.040" opacity="0.9"/><circle cx="10" cy="10" r="4.600" stroke-width="3.600" opacity="0.85"/><circle cx="10" cy="10" r="1.600" stroke-width="1.200" stroke="#5590e8"/></g></svg>
<svg style="left:1056.10px;top:45.70px" width="8.6" height="8.6" viewBox="0 0 20 20" ><g stroke="#3874d2" fill="none" stroke-width="2.300" stroke-linecap="round" stroke-linejoin="round" stroke-width="2.900"><path d="M3.500 3.500l13 13M16.500 3.500l-13 13"/></g></svg>
<div class="a" style="left:1057.900px;top:58.900px;width:10.100px;height:509.400px;background:#f0f0f0"></div>
<div class="a" style="left:1062.200px;top:68.700px;width:1.800px;height:285.900px;background:#8a8a8a"></div>
<div class="vt" style="left:1070.300px;top:83.300px;font-size:7.5px;font-weight:bold;color:#3d88f5;transform:rotate(-90deg) scaleX(.8)">Style pane</div>
<div class="vt" style="left:1070px;top:128.300px;font-size:7.7px;transform:rotate(-90deg) scaleX(.9)">Event pane</div>
<div class="vt b" style="left:1070.300px;top:178px;font-size:7.5px;transform:rotate(-90deg) scaleX(.915)">Variablepane</div>
<div class="band" style="left:810px;top:66px;width:248px;height:10.80px"></div>
<div class="t " style="left:811.9px;top:67.10px;font-size:8px;transform:scaleX(.865)">Widget identity</div>
<svg style="left:1048.70px;top:70.85px" width="4.6" height="2.3" viewBox="0 0 10 5"><path d="M0 5L5 0l5 5z" fill="#3d84e8"/></svg>
<div class="band" style="left:810px;top:123px;width:248px;height:11.00px"></div>
<div class="t " style="left:811.9px;top:124.20px;font-size:8px;transform:scaleX(.865)">Attributes</div>
<svg style="left:1048.70px;top:127.95px" width="4.6" height="2.3" viewBox="0 0 10 5"><path d="M0 5L5 0l5 5z" fill="#3d84e8"/></svg>
<div class="band" style="left:810px;top:485.5px;width:248px;height:11.00px"></div>
<svg style="left:1048.70px;top:490.45px" width="4.6" height="2.3" viewBox="0 0 10 5"><path d="M0 5L5 0l5 5z" fill="#3d84e8"/></svg>
<div class="a" style="left:806px;top:59px;width:252px;height:509px;overflow:hidden"><div class="a" style="left:-806px;top:-59px">
<div class="t g" style="left:810.5px;top:80.20px;">class</div>
<div class="ent" style="left:933.3px;top:78.80px;width:127.70px;height:13.900px"></div>
<div class="t g" style="left:935px;top:81.00px;font-size:8.400px;transform:scaleX(.88)">tkinter.Canvas</div>
<div class="t g" style="left:810.5px;top:95.40px;">id</div>
<div class="ent" style="left:933.3px;top:94.00px;width:127.70px;height:13.900px"></div>
<div class="t " style="left:935px;top:96.20px;font-size:8.400px;transform:scaleX(.88)">Canvas_1</div>
<div class="t g" style="left:810.5px;top:137.70px;">background</div>
<div class="ent" style="left:933.3px;top:136.30px;width:127.70px;height:13.900px"></div>
<div class="a" style="left:935px;top:138.00px;width:11px;height:11px;background:#f0f0f0"></div>
<div class="t " style="left:947.3px;top:138.40px;font-size:8.400px;transform:scaleX(.88)">SystemButtonFace</div>
<svg style="left:1046.20px;top:137.70px" width="9.6" height="9.6" viewBox="0 0 20 20" ><g stroke="#3a78dc" fill="none" stroke-linecap="round"><path d="M12 8L3.500 16.500" stroke-width="4"/><path d="M12 8L4 16" stroke-width="1.200" stroke="#2a4f8f"/><path d="M10.500 4.500l5 5" stroke-width="2.400"/><path d="M13.500 6.500l3.200-3.200" stroke-width="4.600"/></g></svg>
<div class="t g" style="left:810.5px;top:152.90px;">borderwidth</div>
<div class="ent" style="left:933.3px;top:151.50px;width:127.70px;height:13.900px"></div>
<div class="t mono" style="left:934.6px;top:154.00px;">0</div>
<svg style="left:1027.900px;top:152.70px" width="6.400" height="10" viewBox="0 0 12.800 20"><rect x="0.500" y="0.500" width="11.800" height="9" fill="#1c1c1c" stroke="#5c5c5c"/><rect x="0.500" y="10.500" width="11.800" height="9" fill="#1c1c1c" stroke="#5c5c5c"/><path d="M3 7.200l3.400-4.200 3.400 4.200zM3 12.800l3.400 4.200 3.400-4.200z" fill="#eee"/></svg>
<div class="t " style="left:1036.7px;top:153.50px;color:#ddd">px</div>
<svg style="left:1049.50px;top:158.50px" width="4.4" height="2.2" viewBox="0 0 10 5"><path d="M0 0h10L5 5z" fill="#3d84e8"/></svg>
<div class="t g" style="left:810.5px;top:168.10px;">confine</div>
<div class="ent" style="left:933.3px;top:166.70px;width:127.70px;height:13.900px"></div>
<div class="a" style="left:936.700px;top:170.00px;width:7.300px;height:7.600px;background:#1d1d1d;border:1px solid #3c3c3c;border-right-color:#6a6a6a;border-bottom-color:#6a6a6a"></div>
<svg style="left:937.500px;top:170.80px" width="5.500" height="5.500" viewBox="0 0 10 10"><path d="M1.500 5l2.500 3 4.500-6.500" stroke="#fff" stroke-width="2.400" fill="none"/></svg>
<div class="t " style="left:947px;top:168.90px;font-size:7.400px">True</div>
<div class="t g" style="left:810.5px;top:183.30px;">cursor</div>
<div class="ent" style="left:933.3px;top:181.90px;width:127.70px;height:13.900px"></div>
<div class="t " style="left:935.5px;top:183.90px;">select</div>
<svg style="left:1049.50px;top:188.90px" width="4.4" height="2.2" viewBox="0 0 10 5"><path d="M0 0h10L5 5z" fill="#3d84e8"/></svg>
<div class="t g" style="left:810.5px;top:198.50px;">highlightbackground</div>
<div class="ent" style="left:933.3px;top:197.10px;width:127.70px;height:13.900px"></div>
<div class="a" style="left:935px;top:198.80px;width:11px;height:11px;background:#f0f0f0"></div>
<div class="t " style="left:947.3px;top:199.20px;font-size:8.400px;transform:scaleX(.88)">SystemButtonFace</div>
<svg style="left:1046.20px;top:198.50px" width="9.6" height="9.6" viewBox="0 0 20 20" ><g stroke="#3a78dc" fill="none" stroke-linecap="round"><path d="M12 8L3.500 16.500" stroke-width="4"/><path d="M12 8L4 16" stroke-width="1.200" stroke="#2a4f8f"/><path d="M10.500 4.500l5 5" stroke-width="2.400"/><path d="M13.500 6.500l3.200-3.200" stroke-width="4.600"/></g></svg>
<div class="t g" style="left:810.5px;top:213.70px;">highlightcolor</div>
<div class="ent" style="left:933.3px;top:212.30px;width:127.70px;height:13.900px"></div>
<div class="a" style="left:935px;top:214.00px;width:11px;height:11px;background:#646464"></div>
<div class="t " style="left:947.3px;top:214.40px;font-size:8.400px;transform:scaleX(.88)">SystemWindowFrame</div>
<svg style="left:1046.20px;top:213.70px" width="9.6" height="9.6" viewBox="0 0 20 20" ><g stroke="#3a78dc" fill="none" stroke-linecap="round"><path d="M12 8L3.500 16.500" stroke-width="4"/><path d="M12 8L4 16" stroke-width="1.200" stroke="#2a4f8f"/><path d="M10.500 4.500l5 5" stroke-width="2.400"/><path d="M13.500 6.500l3.200-3.200" stroke-width="4.600"/></g></svg>
<div class="t g" style="left:810.5px;top:228.90px;">highlightthickness</div>
<div class="ent" style="left:933.3px;top:227.50px;width:127.70px;height:13.900px"></div>
<div class="t mono" style="left:934.6px;top:230.00px;">2</div>
<svg style="left:1027.900px;top:228.70px" width="6.400" height="10" viewBox="0 0 12.800 20"><rect x="0.500" y="0.500" width="11.800" height="9" fill="#1c1c1c" stroke="#5c5c5c"/><rect x="0.500" y="10.500" width="11.800" height="9" fill="#1c1c1c" stroke="#5c5c5c"/><path d="M3 7.200l3.400-4.200 3.400 4.200zM3 12.800l3.400 4.200 3.400-4.200z" fill="#eee"/></svg>
<div class="t " style="left:1036.7px;top:229.50px;color:#ddd">px</div>
<svg style="left:1049.50px;top:234.50px" width="4.4" height="2.2" viewBox="0 0 10 5"><path d="M0 0h10L5 5z" fill="#3d84e8"/></svg>
<div class="t g" style="left:810.5px;top:244.10px;">insertbackground</div>
<div class="ent" style="left:933.3px;top:242.70px;width:127.70px;height:13.900px"></div>
<div class="a" style="left:935px;top:244.40px;width:11px;height:11px;background:#000000"></div>
<div class="t " style="left:947.3px;top:244.80px;font-size:8.400px;transform:scaleX(.88)">SystemButtonText</div>
<svg style="left:1046.20px;top:244.10px" width="9.6" height="9.6" viewBox="0 0 20 20" ><g stroke="#3a78dc" fill="none" stroke-linecap="round"><path d="M12 8L3.500 16.500" stroke-width="4"/><path d="M12 8L4 16" stroke-width="1.200" stroke="#2a4f8f"/><path d="M10.500 4.500l5 5" stroke-width="2.400"/><path d="M13.500 6.500l3.200-3.200" stroke-width="4.600"/></g></svg>
<div class="t g" style="left:810.5px;top:259.30px;">insertborderwidth</div>
<div class="ent" style="left:933.3px;top:257.90px;width:127.70px;height:13.900px"></div>
<div class="t mono" style="left:934.6px;top:260.40px;">0</div>
<svg style="left:1027.900px;top:259.10px" width="6.400" height="10" viewBox="0 0 12.800 20"><rect x="0.500" y="0.500" width="11.800" height="9" fill="#1c1c1c" stroke="#5c5c5c"/><rect x="0.500" y="10.500" width="11.800" height="9" fill="#1c1c1c" stroke="#5c5c5c"/><path d="M3 7.200l3.400-4.200 3.400 4.200zM3 12.800l3.400 4.200 3.400-4.200z" fill="#eee"/></svg>
<div class="t " style="left:1036.7px;top:259.90px;color:#ddd">px</div>
<svg style="left:1049.50px;top:264.90px" width="4.4" height="2.2" viewBox="0 0 10 5"><path d="M0 0h10L5 5z" fill="#3d84e8"/></svg>
<div class="t g" style="left:810.5px;top:274.50px;">insertofftime</div>
<div class="ent" style="left:933.3px;top:273.10px;width:127.70px;height:13.900px"></div>
<div class="t mono" style="left:934.6px;top:275.60px;">300</div>
<svg style="left:1027.900px;top:274.30px" width="6.400" height="10" viewBox="0 0 12.800 20"><rect x="0.500" y="0.500" width="11.800" height="9" fill="#1c1c1c" stroke="#5c5c5c"/><rect x="0.500" y="10.500" width="11.800" height="9" fill="#1c1c1c" stroke="#5c5c5c"/><path d="M3 7.200l3.400-4.200 3.400 4.200zM3 12.800l3.400 4.200 3.400-4.200z" fill="#eee"/></svg>
<div class="t " style="left:1034.6px;top:275.10px;color:#ddd">ms</div>
<svg style="left:1049.50px;top:280.10px" width="4.4" height="2.2" viewBox="0 0 10 5"><path d="M0 0h10L5 5z" fill="#3d84e8"/></svg>
<div class="t g" style="left:810.5px;top:289.70px;">insertontime</div>
<div class="ent" style="left:933.3px;top:288.30px;width:127.70px;height:13.900px"></div>
<div class="t mono" style="left:934.6px;top:290.80px;">600</div>
<svg style="left:1027.900px;top:289.50px" width="6.400" height="10" viewBox="0 0 12.800 20"><rect x="0.500" y="0.500" width="11.800" height="9" fill="#1c1c1c" stroke="#5c5c5c"/><rect x="0.500" y="10.500" width="11.800" height="9" fill="#1c1c1c" stroke="#5c5c5c"/><path d="M3 7.200l3.400-4.200 3.400 4.200zM3 12.800l3.400 4.200 3.400-4.200z" fill="#eee"/></svg>
<div class="t " style="left:1034.6px;top:290.30px;color:#ddd">ms</div>
<svg style="left:1049.50px;top:295.30px" width="4.4" height="2.2" viewBox="0 0 10 5"><path d="M0 0h10L5 5z" fill="#3d84e8"/></svg>
<div class="t g" style="left:810.5px;top:304.90px;">insertwidth</div>
<div class="ent" style="left:933.3px;top:303.50px;width:127.70px;height:13.900px"></div>
<div class="t mono" style="left:934.6px;top:306.00px;">2</div>
<svg style="left:1027.900px;top:304.70px" width="6.400" height="10" viewBox="0 0 12.800 20"><rect x="0.500" y="0.500" width="11.800" height="9" fill="#1c1c1c" stroke="#5c5c5c"/><rect x="0.500" y="10.500" width="11.800" height="9" fill="#1c1c1c" stroke="#5c5c5c"/><path d="M3 7.200l3.400-4.200 3.400 4.200zM3 12.800l3.400 4.200 3.400-4.200z" fill="#eee"/></svg>
<div class="t " style="left:1036.7px;top:305.50px;color:#ddd">px</div>
<svg style="left:1049.50px;top:310.50px" width="4.4" height="2.2" viewBox="0 0 10 5"><path d="M0 0h10L5 5z" fill="#3d84e8"/></svg>
<div class="t g" style="left:810.5px;top:320.10px;">relief</div>
<div class="ent" style="left:933.3px;top:318.70px;width:127.70px;height:13.900px"></div>
<div class="t " style="left:950.0px;top:320.70px;">flat</div>
<svg style="left:1049.50px;top:325.70px" width="4.4" height="2.2" viewBox="0 0 10 5"><path d="M0 0h10L5 5z" fill="#3d84e8"/></svg>
<div class="t g" style="left:810.5px;top:335.30px;">selectbackground</div>
<div class="ent" style="left:933.3px;top:333.90px;width:127.70px;height:13.900px"></div>
<div class="a" style="left:935px;top:335.60px;width:11px;height:11px;background:#0a78d7"></div>
<div class="t " style="left:947.3px;top:336.00px;font-size:8.400px;transform:scaleX(.88)">SystemHighlight</div>
<svg style="left:1046.20px;top:335.30px" width="9.6" height="9.6" viewBox="0 0 20 20" ><g stroke="#3a78dc" fill="none" stroke-linecap="round"><path d="M12 8L3.500 16.500" stroke-width="4"/><path d="M12 8L4 16" stroke-width="1.200" stroke="#2a4f8f"/><path d="M10.500 4.500l5 5" stroke-width="2.400"/><path d="M13.500 6.500l3.200-3.200" stroke-width="4.600"/></g></svg>
<div class="t g" style="left:810.5px;top:350.50px;">selectborderwidth</div>
<div class="ent" style="left:933.3px;top:349.10px;width:127.70px;height:13.900px"></div>
<div class="t mono" style="left:934.6px;top:351.60px;">1</div>
<svg style="left:1027.900px;top:350.30px" width="6.400" height="10" viewBox="0 0 12.800 20"><rect x="0.500" y="0.500" width="11.800" height="9" fill="#1c1c1c" stroke="#5c5c5c"/><rect x="0.500" y="10.500" width="11.800" height="9" fill="#1c1c1c" stroke="#5c5c5c"/><path d="M3 7.200l3.400-4.200 3.400 4.200zM3 12.800l3.400 4.200 3.400-4.200z" fill="#eee"/></svg>
<div class="t " style="left:1036.7px;top:351.10px;color:#ddd">px</div>
<svg style="left:1049.50px;top:356.10px" width="4.4" height="2.2" viewBox="0 0 10 5"><path d="M0 0h10L5 5z" fill="#3d84e8"/></svg>
<div class="t g" style="left:810.5px;top:365.70px;">selectforeground</div>
<div class="ent" style="left:933.3px;top:364.30px;width:127.70px;height:13.900px"></div>
<div class="a" style="left:935px;top:366.00px;width:11px;height:11px;background:#ffffff"></div>
<div class="t " style="left:947.3px;top:366.40px;font-size:8.400px;transform:scaleX(.88)">SystemHighlightText</div>
<svg style="left:1046.20px;top:365.70px" width="9.6" height="9.6" viewBox="0 0 20 20" ><g stroke="#3a78dc" fill="none" stroke-linecap="round"><path d="M12 8L3.500 16.500" stroke-width="4"/><path d="M12 8L4 16" stroke-width="1.200" stroke="#2a4f8f"/><path d="M10.500 4.500l5 5" stroke-width="2.400"/><path d="M13.500 6.500l3.200-3.200" stroke-width="4.600"/></g></svg>
<div class="t g" style="left:810.5px;top:380.90px;">state</div>
<div class="ent" style="left:933.3px;top:379.50px;width:127.70px;height:13.900px"></div>
<div class="t " style="left:935.5px;top:381.50px;">normal</div>
<svg style="left:1049.50px;top:386.50px" width="4.4" height="2.2" viewBox="0 0 10 5"><path d="M0 0h10L5 5z" fill="#3d84e8"/></svg>
<div class="t g" style="left:810.5px;top:396.10px;">takefocus</div>
<div class="ent" style="left:933.3px;top:394.70px;width:127.70px;height:13.900px"></div>
<div class="a" style="left:936.700px;top:398.00px;width:7.300px;height:7.600px;background:#1d1d1d;border:1px solid #3c3c3c;border-right-color:#6a6a6a;border-bottom-color:#6a6a6a"></div>
<div class="t " style="left:947px;top:396.90px;font-size:7.400px">False</div>
<div class="t g" style="left:810.5px;top:411.30px;">xscrollcommand</div>
<div class="ent" style="left:933.3px;top:409.90px;width:127.70px;height:13.900px"></div>
<div class="t g" style="left:810.5px;top:426.50px;">xscrollincrement</div>
<div class="ent" style="left:933.3px;top:425.10px;width:127.70px;height:13.900px"></div>
<div class="t mono" style="left:934.6px;top:427.60px;">0</div>
<svg style="left:1027.900px;top:426.30px" width="6.400" height="10" viewBox="0 0 12.800 20"><rect x="0.500" y="0.500" width="11.800" height="9" fill="#1c1c1c" stroke="#5c5c5c"/><rect x="0.500" y="10.500" width="11.800" height="9" fill="#1c1c1c" stroke="#5c5c5c"/><path d="M3 7.200l3.400-4.200 3.400 4.200zM3 12.800l3.400 4.200 3.400-4.200z" fill="#eee"/></svg>
<div class="t " style="left:1036.7px;top:427.10px;color:#ddd">px</div>
<svg style="left:1049.50px;top:432.10px" width="4.4" height="2.2" viewBox="0 0 10 5"><path d="M0 0h10L5 5z" fill="#3d84e8"/></svg>
<div class="t g" style="left:810.5px;top:441.70px;">yscrollcommand</div>
<div class="ent" style="left:933.3px;top:440.30px;width:127.70px;height:13.900px"></div>
<div class="t g" style="left:810.5px;top:456.90px;">yscrollincrement</div>
<div class="ent" style="left:933.3px;top:455.50px;width:127.70px;height:13.900px"></div>
<div class="t mono" style="left:934.6px;top:458.00px;">0</div>
<svg style="left:1027.900px;top:456.70px" width="6.400" height="10" viewBox="0 0 12.800 20"><rect x="0.500" y="0.500" width="11.800" height="9" fill="#1c1c1c" stroke="#5c5c5c"/><rect x="0.500" y="10.500" width="11.800" height="9" fill="#1c1c1c" stroke="#5c5c5c"/><path d="M3 7.200l3.400-4.200 3.400 4.200zM3 12.800l3.400 4.200 3.400-4.200z" fill="#eee"/></svg>
<div class="t " style="left:1036.7px;top:457.50px;color:#ddd">px</div>
<svg style="left:1049.50px;top:462.50px" width="4.4" height="2.2" viewBox="0 0 10 5"><path d="M0 0h10L5 5z" fill="#3d84e8"/></svg>
<div class="t g" style="left:810.5px;top:498.90px;">width</div>
<div class="ent" style="left:933.3px;top:497.50px;width:127.70px;height:13.900px"></div>
<div class="t mono" style="left:934.6px;top:500.00px;">471</div>
<svg style="left:1027.900px;top:498.70px" width="6.400" height="10" viewBox="0 0 12.800 20"><rect x="0.500" y="0.500" width="11.800" height="9" fill="#1c1c1c" stroke="#5c5c5c"/><rect x="0.500" y="10.500" width="11.800" height="9" fill="#1c1c1c" stroke="#5c5c5c"/><path d="M3 7.200l3.400-4.200 3.400 4.200zM3 12.800l3.400 4.200 3.400-4.200z" fill="#eee"/></svg>
<div class="t " style="left:1036.7px;top:499.50px;color:#ddd">px</div>
<svg style="left:1049.50px;top:504.50px" width="4.4" height="2.2" viewBox="0 0 10 5"><path d="M0 0h10L5 5z" fill="#3d84e8"/></svg>
<div class="t g" style="left:810.5px;top:513.80px;">height</div>
<div class="ent" style="left:933.3px;top:512.40px;width:127.70px;height:13.900px"></div>
<div class="t mono" style="left:934.6px;top:514.90px;">251</div>
<svg style="left:1027.900px;top:513.60px" width="6.400" height="10" viewBox="0 0 12.800 20"><rect x="0.500" y="0.500" width="11.800" height="9" fill="#1c1c1c" stroke="#5c5c5c"/><rect x="0.500" y="10.500" width="11.800" height="9" fill="#1c1c1c" stroke="#5c5c5c"/><path d="M3 7.200l3.400-4.200 3.400 4.200zM3 12.800l3.400 4.200 3.400-4.200z" fill="#eee"/></svg>
<div class="t " style="left:1036.7px;top:514.40px;color:#ddd">px</div>
<svg style="left:1049.50px;top:519.40px" width="4.4" height="2.2" viewBox="0 0 10 5"><path d="M0 0h10L5 5z" fill="#3d84e8"/></svg>
<div class="t g" style="left:810.5px;top:528.90px;">x</div>
<div class="ent" style="left:933.3px;top:527.50px;width:127.70px;height:13.900px"></div>
<div class="t mono" style="left:934.6px;top:530.00px;">151</div>
<svg style="left:1027.900px;top:528.70px" width="6.400" height="10" viewBox="0 0 12.800 20"><rect x="0.500" y="0.500" width="11.800" height="9" fill="#1c1c1c" stroke="#5c5c5c"/><rect x="0.500" y="10.500" width="11.800" height="9" fill="#1c1c1c" stroke="#5c5c5c"/><path d="M3 7.200l3.400-4.200 3.400 4.200zM3 12.800l3.400 4.200 3.400-4.200z" fill="#eee"/></svg>
<div class="t " style="left:1036.7px;top:529.50px;color:#ddd">px</div>
<svg style="left:1049.50px;top:534.50px" width="4.4" height="2.2" viewBox="0 0 10 5"><path d="M0 0h10L5 5z" fill="#3d84e8"/></svg>
<div class="t g" style="left:810.5px;top:544.00px;">y</div>
<div class="ent" style="left:933.3px;top:542.60px;width:127.70px;height:13.900px"></div>
<div class="t mono" style="left:934.6px;top:545.10px;">68</div>
<svg style="left:1027.900px;top:543.80px" width="6.400" height="10" viewBox="0 0 12.800 20"><rect x="0.500" y="0.500" width="11.800" height="9" fill="#1c1c1c" stroke="#5c5c5c"/><rect x="0.500" y="10.500" width="11.800" height="9" fill="#1c1c1c" stroke="#5c5c5c"/><path d="M3 7.200l3.400-4.200 3.400 4.200zM3 12.800l3.400 4.200 3.400-4.200z" fill="#eee"/></svg>
<div class="t " style="left:1036.7px;top:544.60px;color:#ddd">px</div>
<svg style="left:1049.50px;top:549.60px" width="4.4" height="2.2" viewBox="0 0 10 5"><path d="M0 0h10L5 5z" fill="#3d84e8"/></svg>
<div class="t g" style="left:810.5px;top:559.10px;">bordermode</div>
<div class="ent" style="left:933.3px;top:557.70px;width:127.70px;height:13.900px"></div>
<div class="t " style="left:935.5px;top:559.70px;">outside</div>
<svg style="left:1049.50px;top:564.70px" width="4.4" height="2.2" viewBox="0 0 10 5"><path d="M0 0h10L5 5z" fill="#3d84e8"/></svg>
</div></div>
<div class="a" style="left:682.300px;top:202.500px;width:214.200px;height:291.500px;background:#2e2e2e;border-radius:4px;box-shadow:0 5px 18px 2px rgba(0,0,0,0.36), 0 0 0 0.700px rgba(85,85,85,0.6);overflow:hidden"><div class="a" style="left:0;top:0;width:100%;height:17px;background:#f3f3f3"></div></div>
<svg style="left:686.50px;top:206.00px" width="9.6" height="9.6" viewBox="0 0 20 20" ><ellipse cx="10.500" cy="10" rx="9.500" ry="9.300" fill="#0b6fd0"/><path d="M0 5.500l4.500 1.500-4.500 1.500zM0 11.500l4 1.500-4 2z" fill="#f0f0f0" opacity="0.9"/><path d="M8 6.200h8.500v2.400h-8.500z" fill="#fff"/><path d="M7.500 9.300h8.500v1.800h-8.500z" fill="#9cc6ef"/><path d="M9.500 11.600h6l-0.500 2h-3.500l-2 4.500h-2.300z" fill="#fff"/></svg>
<div class="t " style="left:699.3px;top:206.80px;color:#777;font-size:7.600px;transform:scaleX(.85)">Variablepane</div>
<svg style="left:884.500px;top:207.300px" width="6.500" height="6.500" viewBox="0 0 10 10"><path d="M0.500 0.500l9 9m0-9l-9 9" stroke="#777" stroke-width="1.200"/></svg>
<div class="t b" style="left:684.5px;top:223.50px;">Variablepane</div>
<div class="a" style="left:683px;top:235px;width:213px;height:1px;background:#333"></div>
<svg style="left:834.75px;top:223.05px" width="8.5" height="8.5" viewBox="0 0 20 20" ><g stroke="#3d84e8" stroke-width="1.700" stroke-linejoin="round" stroke-linecap="round"><path d="M4.500 5h11v11.500a1.500 1.500 0 0 1-1.500 1.500h-8a1.500 1.500 0 0 1-1.500-1.500z" fill="#3d84e8" fill-opacity="0.4"/><path d="M3 4.500h14M7.500 2.300h5" fill="none"/><path d="M8 8v7M12 8v7" stroke-width="1.100" opacity="0.8"/></g></svg>
<svg style="left:847.55px;top:223.25px" width="8.5" height="8.5" viewBox="0 0 20 20" ><g stroke="#3874d2" fill="none" stroke-width="2.300" stroke-linecap="round" stroke-linejoin="round"><path d="M10 2v16M2 10h16"/></g></svg>
<svg style="left:859.75px;top:223.05px" width="8.5" height="8.5" viewBox="0 0 20 20" ><g stroke="#3874d2" fill="none" stroke-width="2.300" stroke-linecap="round" stroke-linejoin="round"><circle cx="13" cy="7.500" r="5"/><path d="M9.300 11.200L1.500 19"/></g></svg>
<svg style="left:872.05px;top:223.25px" width="8.5" height="8.5" viewBox="0 0 20 20" ><g stroke="#3874d2" fill="none"><circle cx="10" cy="10" r="6.800" stroke-width="2.800" stroke-dasharray="3.300 2.040" opacity="0.9"/><circle cx="10" cy="10" r="4.600" stroke-width="3.600" opacity="0.85"/><circle cx="10" cy="10" r="1.600" stroke-width="1.200" stroke="#5590e8"/></g></svg>
<svg style="left:885.05px;top:223.75px" width="7.5" height="7.5" viewBox="0 0 20 20" ><g stroke="#3874d2" fill="none" stroke-width="2.300" stroke-linecap="round" stroke-linejoin="round" stroke-width="2.900"><path d="M3.500 3.500l13 13M16.500 3.500l-13 13"/></g></svg>
<svg style="left:781.55px;top:352.05px" width="15.5" height="15.5" viewBox="0 0 20 20" ><g stroke="#3874d2" fill="none" stroke-width="2.300" stroke-linecap="round" stroke-linejoin="round"><path d="M10 2v16M2 10h16"/></g></svg>
<div class="t c" style="left:739.700px;width:100px;text-align:center;top:367.700px;color:#c8c8c8;font-size:7.800px;transform:scaleX(.9)">No variables added</div>
<div class="a" style="left:97.200px;top:432.300px;width:111.700px;height:105.200px;background:#2f2f2f;border:1px solid #dcdcdc;box-shadow:0.5px 0.5px 0 #999"></div>
<div class="t " style="left:110.4px;top:434.70px;color:#f0f0f0;font-size:8.400px;transform:scaleX(.86)">copy</div>
<div class="t " style="left:178.7px;top:434.70px;color:#f0f0f0;font-size:8.400px;transform:scaleX(.86)">Ctrl+C</div>
<svg style="left:98.20px;top:434.70px" width="8.6" height="8.6" viewBox="0 0 20 20" ><g stroke="#3d84e8" fill="none" stroke-width="1.700" stroke-linejoin="round"><path d="M7 5h6.500l3.500 3.500v9.500h-10z" fill="#303030"/><path d="M3.500 14V1.500h8.500"/></g></svg>
<div class="t " style="left:110.4px;top:444.90px;color:#f0f0f0;font-size:8.400px;transform:scaleX(.86)">duplicate</div>
<div class="t " style="left:178.7px;top:444.90px;color:#f0f0f0;font-size:8.400px;transform:scaleX(.86)">Ctrl+D</div>
<svg style="left:98.20px;top:444.90px" width="8.6" height="8.6" viewBox="0 0 20 20" ><g stroke="#3d84e8" fill="none" stroke-width="1.700" stroke-linejoin="round"><path d="M7 5h6.500l3.500 3.500v9.500h-10z" fill="#303030"/><path d="M3.500 14V1.500h8.500"/></g></svg>
<div class="t " style="left:110.4px;top:455.00px;color:#5a5a5a;font-size:8.400px;transform:scaleX(.86)">paste</div>
<div class="t " style="left:178.7px;top:455.00px;color:#5a5a5a;font-size:8.400px;transform:scaleX(.86)">Ctrl+V</div>
<svg style="left:98.50px;top:455.30px" width="8" height="8" viewBox="0 0 20 20" ><g stroke="#2c4a78" stroke-width="1.700" stroke-linejoin="round" stroke-linecap="round"><path d="M4.500 5h11v11.500a1.500 1.500 0 0 1-1.500 1.500h-8a1.500 1.500 0 0 1-1.500-1.500z" fill="#2c4a78" fill-opacity="0.4"/><path d="M3 4.500h14M7.500 2.300h5" fill="none"/><path d="M8 8v7M12 8v7" stroke-width="1.100" opacity="0.8"/></g></svg>
<div class="t " style="left:110.4px;top:465.00px;color:#f0f0f0;font-size:8.400px;transform:scaleX(.86)">cut</div>
<div class="t " style="left:178.7px;top:465.00px;color:#f0f0f0;font-size:8.400px;transform:scaleX(.86)">Ctrl+X</div>
<svg style="left:98.25px;top:465.05px" width="8.5" height="8.5" viewBox="0 0 20 20" ><g stroke="#3d84e8" fill="none" stroke-width="1.500"><path d="M5.500 9V2h13v15.500h-8" stroke-dasharray="2.200 1.200" stroke-width="1.300"/><path d="M17 5L4.500 13M5 10l9 5.500" stroke-width="1.800"/><circle cx="3" cy="10.500" r="2.100"/><circle cx="5.500" cy="16.800" r="2.100"/></g></svg>
<div class="t " style="left:110.4px;top:481.00px;color:#f0f0f0;font-size:8.400px;transform:scaleX(.86)">delete</div>
<div class="t " style="left:178.7px;top:481.00px;color:#f0f0f0;font-size:8.400px;transform:scaleX(.86)">Del</div>
<svg style="left:98.50px;top:481.30px" width="8" height="8" viewBox="0 0 20 20" ><g stroke="#3d84e8" stroke-width="1.700" stroke-linejoin="round" stroke-linecap="round"><path d="M4.500 5h11v11.500a1.500 1.500 0 0 1-1.500 1.500h-8a1.500 1.500 0 0 1-1.500-1.500z" fill="#3d84e8" fill-opacity="0.4"/><path d="M3 4.500h14M7.500 2.300h5" fill="none"/><path d="M8 8v7M12 8v7" stroke-width="1.100" opacity="0.8"/></g></svg>
<div class="t " style="left:110.4px;top:496.70px;color:#f0f0f0;font-size:8.400px;transform:scaleX(.86)">send to back</div>
<div class="t " style="left:178.7px;top:496.70px;color:#f0f0f0;font-size:8.400px;transform:scaleX(.86)">]</div>
<svg style="left:98.50px;top:496.70px" width="8.6" height="8.6" viewBox="0 0 20 20" ><rect x="1.500" y="1.500" width="10" height="10" fill="#3d84ee"/><rect x="7" y="7" width="11.500" height="11.500" fill="#303030" stroke="#3a78d6" stroke-width="1.600"/></svg>
<div class="t " style="left:110.4px;top:506.90px;color:#f0f0f0;font-size:8.400px;transform:scaleX(.86)">bring to front</div>
<div class="t " style="left:178.7px;top:506.90px;color:#f0f0f0;font-size:8.400px;transform:scaleX(.86)">[</div>
<svg style="left:98.50px;top:506.90px" width="8.6" height="8.6" viewBox="0 0 20 20" ><rect x="2" y="2" width="10" height="10" fill="none" stroke="#3a78d6" stroke-width="1.600"/><rect x="7" y="7" width="12" height="12" fill="#3d84ee"/></svg>
<div class="t " style="left:110.4px;top:517.10px;color:#f0f0f0;font-size:8.400px;transform:scaleX(.86)">back one step</div>
<div class="t " style="left:178.7px;top:517.10px;color:#f0f0f0;font-size:8.400px;transform:scaleX(.86)">Ctrl+]</div>
<svg style="left:98.50px;top:517.10px" width="8.6" height="8.6" viewBox="0 0 20 20" ><rect x="1.500" y="1.500" width="10" height="10" fill="#3d84ee"/><rect x="7" y="7" width="11.500" height="11.500" fill="#303030" stroke="#3a78d6" stroke-width="1.600"/></svg>
<div class="t " style="left:110.4px;top:527.20px;color:#f0f0f0;font-size:8.400px;transform:scaleX(.86)">forward one step</div>
<div class="t " style="left:178.7px;top:527.20px;color:#f0f0f0;font-size:8.400px;transform:scaleX(.86)">Ctrl+[</div>
<svg style="left:98.50px;top:527.20px" width="8.6" height="8.6" viewBox="0 0 20 20" ><rect x="2" y="2" width="10" height="10" fill="none" stroke="#3a78d6" stroke-width="1.600"/><rect x="7" y="7" width="12" height="12" fill="#3d84ee"/></svg>
<div class="a" style="left:98.800px;top:477.300px;width:108.500px;height:1px;background:#8c8c8c"></div>
<div class="a" style="left:98.800px;top:493.300px;width:108.500px;height:1px;background:#8c8c8c"></div>
<!--MORE2-->
</body></html>
